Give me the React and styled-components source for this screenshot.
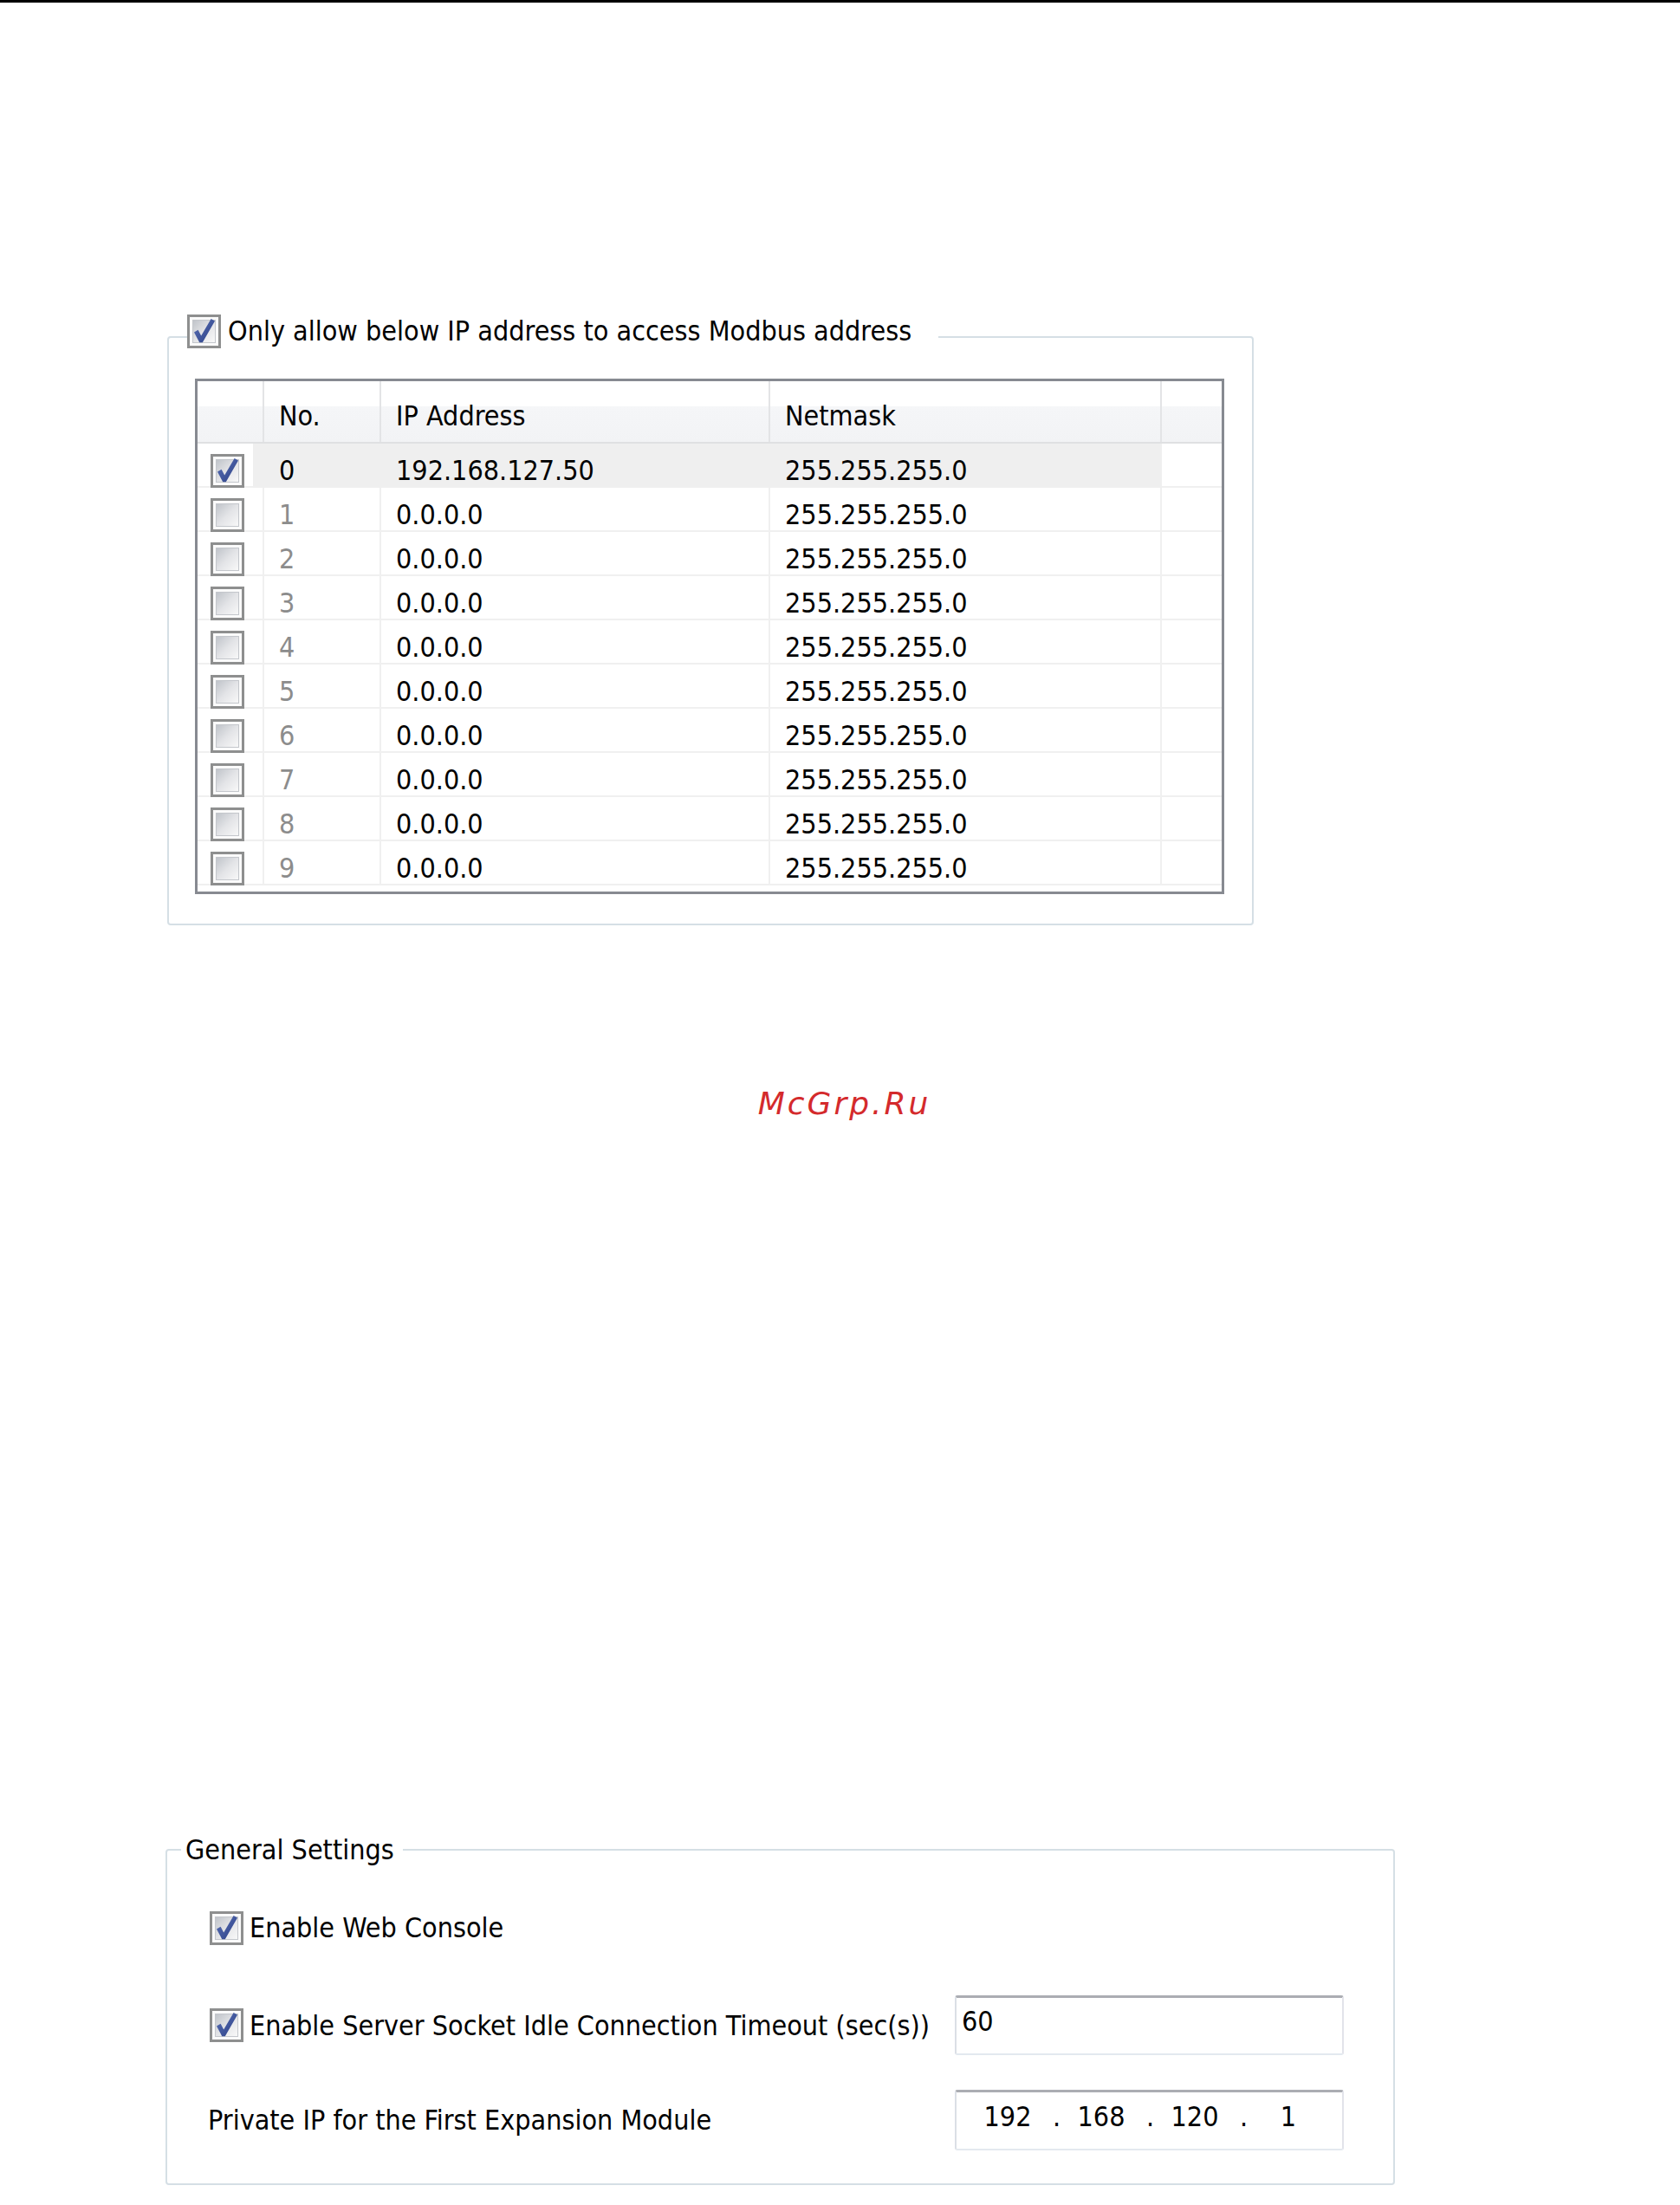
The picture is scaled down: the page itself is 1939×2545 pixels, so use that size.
import React, { useId } from "react";
import styled, { createGlobalStyle } from "styled-components";

const GlobalStyle = createGlobalStyle`
  html, body { margin: 0; padding: 0; background: #ffffff; }
  body {
    font-family: "DejaVu Sans Condensed", "DejaVu Sans", sans-serif;
    font-stretch: condensed;
    font-size: 32px;
    color: #000000;
  }
`;

const Page = styled.div`
  width: 1939px;
  height: 2545px;
  display: flex;
  flex-direction: column;
  align-items: flex-start;
  background: #ffffff;
  overflow: hidden;
`;

const TopRule = styled.div`
  align-self: stretch;
  flex: none;
  height: 3px;
  background: #000000;
`;

const Group = styled.fieldset`
  box-sizing: border-box;
  width: ${(p) => p.$width}px;
  min-width: 0;
  margin: ${(p) => p.$top}px 0 0 ${(p) => p.$left}px;
  padding: ${(p) => p.$pad};
  border: 2px solid #d5dfe5;
  border-radius: 4px;
`;

const Legend = styled.legend`
  margin-left: ${(p) => p.$shift}px;
  padding: ${(p) => p.$pad};
  font-size: 32px;
  line-height: 40px;
`;

const LegendInner = styled.div`
  display: flex;
  align-items: center;
  gap: 8px;
  height: 40px;
  white-space: nowrap;
`;

const CheckLabel = styled.div`
  display: flex;
  align-items: center;
  gap: 7px;
  margin-left: ${(p) => p.$indent || 0}px;
  line-height: 40px;
  white-space: nowrap;
`;

const BoxSvg = styled.svg`
  display: block;
  flex: none;
  width: 39px;
  height: 39px;
`;

function CheckBox({ checked }) {
  const raw = useId();
  const id = raw.replace(/[^a-zA-Z0-9_-]/g, "");
  return (
    <BoxSvg viewBox="0 0 39 39">
      <defs>
        <linearGradient id={`in${id}`} x1="0" y1="0" x2="1" y2="1">
          <stop offset="0" stopColor="#bfc3c9" />
          <stop offset="0.5" stopColor="#e3e4e7" />
          <stop offset="1" stopColor="#f9f9f9" />
        </linearGradient>
        <linearGradient id={`ck${id}`} x1="0" y1="0" x2="1" y2="1">
          <stop offset="0" stopColor="#5b72b6" />
          <stop offset="1" stopColor="#2b3f86" />
        </linearGradient>
      </defs>
      <rect x="1.5" y="1.5" width="36" height="36" fill="#fbfbfb" stroke="#8e8f8f" strokeWidth="3" />
      <rect x="6.5" y="6.5" width="26" height="26" fill={`url(#in${id})`} stroke="#c4c7cc" strokeWidth="1" />
      {checked && (
        <path
          d="M8 20.5 L12.6 17.8 L16.2 24.5 L27.6 5 L32 7.4 L17.8 32.2 L14.2 32.2 Z"
          fill={`url(#ck${id})`}
        />
      )}
    </BoxSvg>
  );
}

/* ---------- list view ---------- */

const COLS = "77px 135px 449px 452px 69px";

const ListView = styled.div`
  box-sizing: border-box;
  width: 1188px;
  border: 3px solid #878a91;
  padding-bottom: 7px;
  background: #ffffff;
`;

const HeaderRow = styled.div`
  display: grid;
  grid-template-columns: ${COLS};
  box-sizing: border-box;
  height: 72px;
  border-bottom: 2px solid #dfe0e2;
  background: linear-gradient(
    to bottom,
    #ffffff 0%,
    #ffffff 42%,
    #f5f6f8 42%,
    #f2f3f5 100%
  );
`;

const HeaderCell = styled.div`
  display: flex;
  align-items: center;
  box-sizing: border-box;
  padding: 10px 0 0 17px;
  border-right: ${(p) => (p.$last ? "none" : "2px solid #e3e4e6")};
  line-height: 40px;
`;

const Row = styled.div`
  display: grid;
  grid-template-columns: ${COLS};
  box-sizing: border-box;
  height: 51px;
  border-bottom: 2px solid #f0f0f0;
`;

const Cell = styled.div`
  display: flex;
  align-items: center;
  box-sizing: border-box;
  padding: 11px 0 0 ${(p) => (p.$check ? 15 : 17)}px;
  border-right: ${(p) =>
    p.$last ? "none" : `2px solid ${p.$sel ? "#efefef" : "#f0f0f0"}`};
  background: ${(p) =>
    !p.$sel || p.$last
      ? "transparent"
      : p.$check
      ? "linear-gradient(to right, transparent 64px, #efefef 64px)"
      : "#efefef"};
  color: ${(p) => (p.$dim ? "#8c8c8c" : "#000000")};
  line-height: 40px;
  white-space: nowrap;
`;

const rows = [
  { n: 0, ip: "192.168.127.50", mask: "255.255.255.0", on: true },
  ...Array.from({ length: 9 }, (_, i) => ({
    n: i + 1,
    ip: "0.0.0.0",
    mask: "255.255.255.0",
    on: false,
  })),
];

/* ---------- watermark ---------- */

const Watermark = styled.div`
  align-self: center;
  margin: 181px 0 0 10px;
  font-family: "DejaVu Sans", sans-serif;
  font-stretch: normal;
  font-style: italic;
  font-size: 36px;
  line-height: 50px;
  letter-spacing: 3px;
  color: #d42a2c;
`;

/* ---------- general settings ---------- */

const SettingRow = styled.div`
  display: grid;
  grid-template-columns: 862px 449px;
  align-items: center;
  height: ${(p) => p.$h}px;
  margin-top: ${(p) => p.$mt}px;
`;

const PlainLabel = styled.div`
  line-height: 40px;
  white-space: nowrap;
`;

const TextBox = styled.div`
  box-sizing: border-box;
  display: flex;
  align-items: center;
  width: 449px;
  height: 100%;
  padding: 0 0 10px ${(p) => p.$padLeft}px;
  border-style: solid;
  border-width: 3px 2px 2px 2px;
  border-color: #abadb3 #e2e3ea #e3e9ef #dbdfe6;
  border-radius: 3px;
  background: #ffffff;
  line-height: 40px;
`;

const IpField = styled.span`
  width: 88px;
  text-align: center;
`;

const IpDot = styled.span`
  box-sizing: border-box;
  width: 20px;
  padding-left: 8px;
`;

export default function App() {
  const ip = ["192", "168", "120", "1"];
  return (
    <>
      <GlobalStyle />
      <Page>
        <TopRule />

        <Group $width={1254} $top={359} $left={193} $pad="21px 32px 34px 30px">
          <Legend $shift={-9} $pad="0 31px 14px 0">
            <LegendInner>
              <CheckBox checked />
              <span>Only allow below IP address to access Modbus address</span>
            </LegendInner>
          </Legend>
          <ListView>
            <HeaderRow>
              <HeaderCell />
              <HeaderCell>No.</HeaderCell>
              <HeaderCell>IP Address</HeaderCell>
              <HeaderCell>Netmask</HeaderCell>
              <HeaderCell $last />
            </HeaderRow>
            {rows.map((r) => (
              <Row key={r.n}>
                <Cell $check $sel={r.on}>
                  <CheckBox checked={r.on} />
                </Cell>
                <Cell $sel={r.on} $dim={!r.on}>
                  {r.n}
                </Cell>
                <Cell $sel={r.on}>{r.ip}</Cell>
                <Cell $sel={r.on}>{r.mask}</Cell>
                <Cell $last />
              </Row>
            ))}
          </ListView>
        </Group>

        <Watermark>McGrp.Ru</Watermark>

        <Group $width={1419} $top={816} $left={191} $pad="50px 57px 38px 47px">
          <Legend $shift={-31} $pad="0 10px 0 5px">
            General Settings
          </Legend>
          <SettingRow $h={40} $mt={0}>
            <CheckLabel $indent={2}>
              <CheckBox checked />
              <span>Enable Web Console</span>
            </CheckLabel>
          </SettingRow>
          <SettingRow $h={69} $mt={58}>
            <CheckLabel $indent={2}>
              <CheckBox checked />
              <span>Enable Server Socket Idle Connection Timeout (sec(s))</span>
            </CheckLabel>
            <TextBox $padLeft={6}>60</TextBox>
          </SettingRow>
          <SettingRow $h={70} $mt={40}>
            <PlainLabel>Private IP for the First Expansion Module</PlainLabel>
            <TextBox $padLeft={15}>
              <IpField>{ip[0]}</IpField>
              <IpDot>.</IpDot>
              <IpField>{ip[1]}</IpField>
              <IpDot>.</IpDot>
              <IpField>{ip[2]}</IpField>
              <IpDot>.</IpDot>
              <IpField>{ip[3]}</IpField>
            </TextBox>
          </SettingRow>
        </Group>
      </Page>
    </>
  );
}
